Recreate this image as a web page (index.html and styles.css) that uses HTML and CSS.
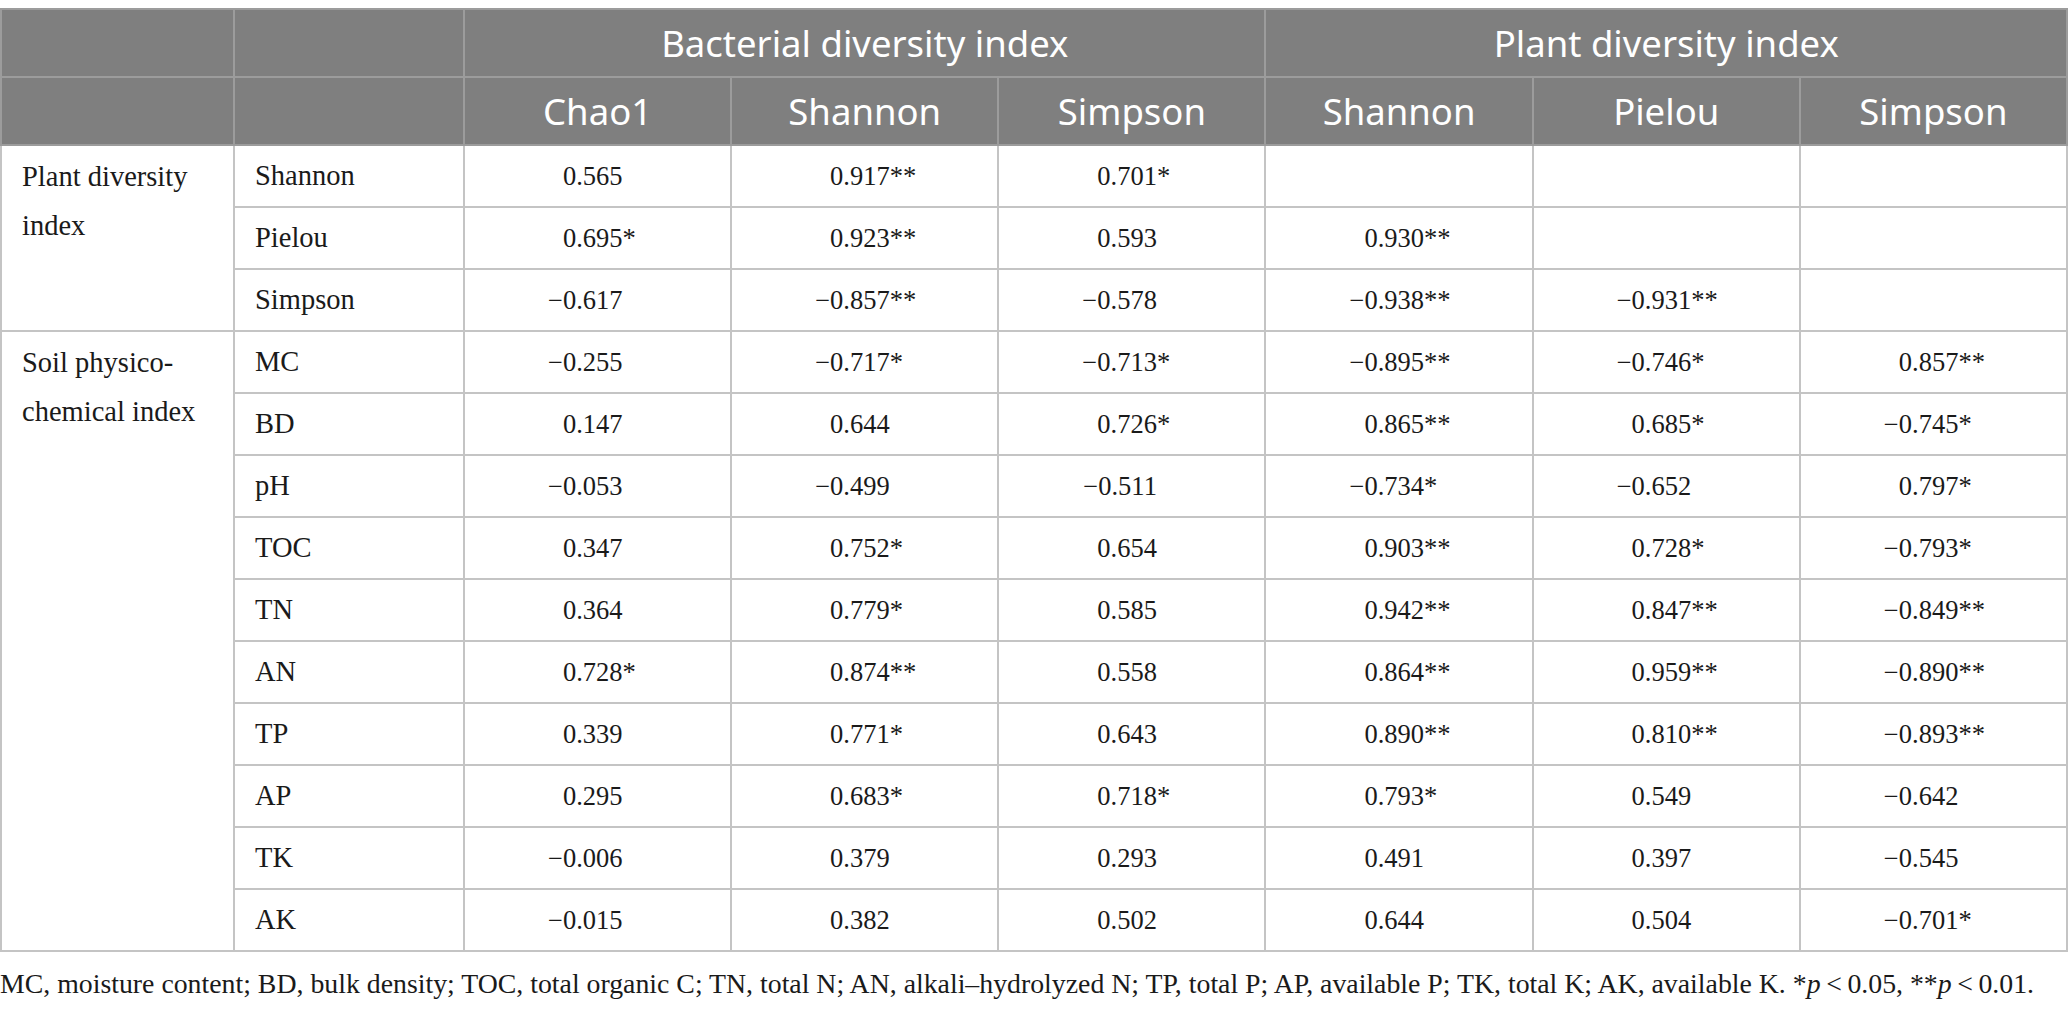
FILE: index.html
```html
<!DOCTYPE html>
<html lang="en">
<head>
    <meta charset="UTF-8">
    <title>Correlation of diversity indices</title>
    <link rel="stylesheet" href="styles.css">
</head>
<body>

    <table class="corr-table">
        <colgroup>
            <col class="c-group">
            <col class="c-label">
            <col span="6" class="c-val">
        </colgroup>
        <thead>
            <tr>
                <th></th>
                <th></th>
                <th colspan="3">Bacterial diversity index</th>
                <th colspan="3">Plant diversity index</th>
            </tr>
            <tr>
                <th></th>
                <th></th>
                <th>Chao1</th>
                <th>Shannon</th>
                <th>Simpson</th>
                <th>Shannon</th>
                <th>Pielou</th>
                <th>Simpson</th>
            </tr>
        </thead>
        <tbody>
            <tr>
                <td rowspan="3" class="group">Plant diversity<br>index</td>
                <td class="label">Shannon</td>
                <td><span class="v">0.565</span><span class="s"></span></td>
                <td><span class="v">0.917</span><span class="s">**</span></td>
                <td><span class="v">0.701</span><span class="s">*</span></td>
                <td></td>
                <td></td>
                <td></td>
            </tr>
            <tr>
                <td class="label">Pielou</td>
                <td><span class="v">0.695</span><span class="s">*</span></td>
                <td><span class="v">0.923</span><span class="s">**</span></td>
                <td><span class="v">0.593</span><span class="s"></span></td>
                <td><span class="v">0.930</span><span class="s">**</span></td>
                <td></td>
                <td></td>
            </tr>
            <tr>
                <td class="label">Simpson</td>
                <td><span class="v">&minus;0.617</span><span class="s"></span></td>
                <td><span class="v">&minus;0.857</span><span class="s">**</span></td>
                <td><span class="v">&minus;0.578</span><span class="s"></span></td>
                <td><span class="v">&minus;0.938</span><span class="s">**</span></td>
                <td><span class="v">&minus;0.931</span><span class="s">**</span></td>
                <td></td>
            </tr>
            <tr>
                <td rowspan="10" class="group">Soil physico-<br>chemical index</td>
                <td class="label">MC</td>
                <td><span class="v">&minus;0.255</span><span class="s"></span></td>
                <td><span class="v">&minus;0.717</span><span class="s">*</span></td>
                <td><span class="v">&minus;0.713</span><span class="s">*</span></td>
                <td><span class="v">&minus;0.895</span><span class="s">**</span></td>
                <td><span class="v">&minus;0.746</span><span class="s">*</span></td>
                <td><span class="v">0.857</span><span class="s">**</span></td>
            </tr>
            <tr>
                <td class="label">BD</td>
                <td><span class="v">0.147</span><span class="s"></span></td>
                <td><span class="v">0.644</span><span class="s"></span></td>
                <td><span class="v">0.726</span><span class="s">*</span></td>
                <td><span class="v">0.865</span><span class="s">**</span></td>
                <td><span class="v">0.685</span><span class="s">*</span></td>
                <td><span class="v">&minus;0.745</span><span class="s">*</span></td>
            </tr>
            <tr>
                <td class="label">pH</td>
                <td><span class="v">&minus;0.053</span><span class="s"></span></td>
                <td><span class="v">&minus;0.499</span><span class="s"></span></td>
                <td><span class="v">&minus;0.511</span><span class="s"></span></td>
                <td><span class="v">&minus;0.734</span><span class="s">*</span></td>
                <td><span class="v">&minus;0.652</span><span class="s"></span></td>
                <td><span class="v">0.797</span><span class="s">*</span></td>
            </tr>
            <tr>
                <td class="label">TOC</td>
                <td><span class="v">0.347</span><span class="s"></span></td>
                <td><span class="v">0.752</span><span class="s">*</span></td>
                <td><span class="v">0.654</span><span class="s"></span></td>
                <td><span class="v">0.903</span><span class="s">**</span></td>
                <td><span class="v">0.728</span><span class="s">*</span></td>
                <td><span class="v">&minus;0.793</span><span class="s">*</span></td>
            </tr>
            <tr>
                <td class="label">TN</td>
                <td><span class="v">0.364</span><span class="s"></span></td>
                <td><span class="v">0.779</span><span class="s">*</span></td>
                <td><span class="v">0.585</span><span class="s"></span></td>
                <td><span class="v">0.942</span><span class="s">**</span></td>
                <td><span class="v">0.847</span><span class="s">**</span></td>
                <td><span class="v">&minus;0.849</span><span class="s">**</span></td>
            </tr>
            <tr>
                <td class="label">AN</td>
                <td><span class="v">0.728</span><span class="s">*</span></td>
                <td><span class="v">0.874</span><span class="s">**</span></td>
                <td><span class="v">0.558</span><span class="s"></span></td>
                <td><span class="v">0.864</span><span class="s">**</span></td>
                <td><span class="v">0.959</span><span class="s">**</span></td>
                <td><span class="v">&minus;0.890</span><span class="s">**</span></td>
            </tr>
            <tr>
                <td class="label">TP</td>
                <td><span class="v">0.339</span><span class="s"></span></td>
                <td><span class="v">0.771</span><span class="s">*</span></td>
                <td><span class="v">0.643</span><span class="s"></span></td>
                <td><span class="v">0.890</span><span class="s">**</span></td>
                <td><span class="v">0.810</span><span class="s">**</span></td>
                <td><span class="v">&minus;0.893</span><span class="s">**</span></td>
            </tr>
            <tr>
                <td class="label">AP</td>
                <td><span class="v">0.295</span><span class="s"></span></td>
                <td><span class="v">0.683</span><span class="s">*</span></td>
                <td><span class="v">0.718</span><span class="s">*</span></td>
                <td><span class="v">0.793</span><span class="s">*</span></td>
                <td><span class="v">0.549</span><span class="s"></span></td>
                <td><span class="v">&minus;0.642</span><span class="s"></span></td>
            </tr>
            <tr>
                <td class="label">TK</td>
                <td><span class="v">&minus;0.006</span><span class="s"></span></td>
                <td><span class="v">0.379</span><span class="s"></span></td>
                <td><span class="v">0.293</span><span class="s"></span></td>
                <td><span class="v">0.491</span><span class="s"></span></td>
                <td><span class="v">0.397</span><span class="s"></span></td>
                <td><span class="v">&minus;0.545</span><span class="s"></span></td>
            </tr>
            <tr>
                <td class="label">AK</td>
                <td><span class="v">&minus;0.015</span><span class="s"></span></td>
                <td><span class="v">0.382</span><span class="s"></span></td>
                <td><span class="v">0.502</span><span class="s"></span></td>
                <td><span class="v">0.644</span><span class="s"></span></td>
                <td><span class="v">0.504</span><span class="s"></span></td>
                <td><span class="v">&minus;0.701</span><span class="s">*</span></td>
            </tr>
        </tbody>
    </table>

    <p class="table-note">MC, moisture content; BD, bulk density; TOC, total organic C; TN, total N; AN, alkali&ndash;hydrolyzed N; TP, total P; AP, available P; TK, total K; AK, available K. *<i>p</i>&thinsp;&lt;&thinsp;0.05, **<i>p</i>&thinsp;&lt;&thinsp;0.01.</p>

</body>
</html>
```

FILE: styles.css
```css
body{
    margin: 0;
    padding-top: 8px;
    background: #ffffff;
    color: #1a1a1a;
    font-family: "Liberation Serif", "Times New Roman", serif;
}

.corr-table{
    width: 2068px;
    table-layout: fixed;
    border-collapse: collapse;
    border: 2px solid #c4c4c4;
}
.c-group{
    width: 233px;
}
.c-label{
    width: 230px;
}

.corr-table thead th{
    background: #7f7f7f;
    color: #ffffff;
    font-family: "Noto Sans", "Open Sans", sans-serif;
    font-weight: 400;
    font-size: 36.5px;
    height: 66px;
    padding: 0;
    border: 2px solid #9c9c9c;
    text-align: center;
    vertical-align: middle;
}

.corr-table tbody td{
    height: 60px;
    padding: 0 30px 0 0;
    border: 2px solid #c4c4c4;
    font-size: 26.5px;
    text-align: center;
    vertical-align: middle;
    white-space: nowrap;
}
.corr-table tbody td.label{
    padding: 0 0 0 20px;
    font-size: 28.5px;
    text-align: left;
}
.corr-table tbody td.group{
    padding: 6px 0 0 20px;
    font-size: 28.5px;
    text-align: left;
    vertical-align: top;
    line-height: 49px;
}

.v{
    display: inline-block;
    width: 80px;
    text-align: right;
}
.s{
    display: inline-block;
    width: 0;
    text-align: left;
}

.table-note{
    margin: 16px 0 0 0;
    font-size: 27.8px;
    white-space: nowrap;
}
```
